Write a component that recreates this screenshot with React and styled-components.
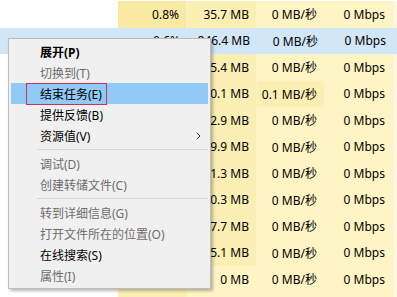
import React from "react";
import styled, { createGlobalStyle } from "styled-components";

const Global = createGlobalStyle`
  html, body { margin: 0; padding: 0; background: #ffffff; }
  body { width: 397px; height: 297px; overflow: hidden; font-family: "Noto Sans", "Noto Sans CJK SC", sans-serif; }
`;

const Page = styled.div`
  position: relative;
  width: 397px;
  height: 297px;
  overflow: hidden;
  background: #ffffff;
`;

const Table = styled.div`
  display: grid;
  grid-template-columns: 118px 69px 70px 68px 68px 1fr;
  grid-auto-rows: 26.5px;
  padding-top: 1px;
`;

const heat = {
  0: "#ffffff",
  1: "#fff4c4",
  2: "#fcefb3",
  3: "#f9e9a3",
  4: "#fdf6dc",
};

const Cell = styled.div`
  display: flex;
  align-items: center;
  justify-content: flex-end;
  padding-right: 7px;
  font-size: 12px;
  color: #000;
  white-space: nowrap;
  background: ${(p) => (p.$sel ? "#d1e7f8" : heat[p.$h])};
  border-right: ${(p) => (p.$h === 0 ? "none" : p.$sel ? "1px solid #d8ebf8" : "1px solid #fbf1cc")};
  box-sizing: border-box;
`;

const Menu = styled.div`
  position: absolute;
  left: 8px;
  top: 38px;
  width: 203px;
  box-sizing: border-box;
  background: #f0f0f0;
  border: 1px solid #bdbdbd;
  padding: 2px;
  box-shadow: 2px 2px 3px rgba(0, 0, 0, 0.28);
  font-family: "Noto Sans", "Noto Sans CJK SC", sans-serif;
`;

const Item = styled.div`
  position: relative;
  height: 21px;
  display: flex;
  align-items: center;
  padding-left: 29px;
  font-size: 12px;
  font-weight: ${(p) => (p.$bold ? 700 : 400)};
  color: ${(p) => (p.$disabled ? "#6d6d6d" : "#000")};
  background: ${(p) => (p.$active ? "#91c9f7" : "transparent")};
  white-space: nowrap;
`;

const Sep = styled.div`
  height: 7px;
  display: flex;
  align-items: center;
  padding-left: 26px;
  &::after {
    content: "";
    flex: 1;
    height: 1px;
    background: #d7d7d7;
  }
`;

const Arrow = styled.svg`
  position: absolute;
  right: 7px;
  top: 7px;
`;

const RedBox = styled.div`
  position: absolute;
  left: 15px;
  top: 0;
  width: 81px;
  height: 22px;
  box-sizing: border-box;
  border: 1.5px solid #c8344a;
`;

const rows = [
  ["0.8%", 3, "35.7 MB", 2, "0 MB/秒", 1, "0 Mbps", 1],
  ["0.6%", 0, "846.4 MB", 0, "0 MB/秒", 0, "0 Mbps", 0, true],
  ["0%", 2, "25.4 MB", 2, "0 MB/秒", 1, "0 Mbps", 1],
  ["0%", 2, "30.1 MB", 2, "0.1 MB/秒", 2, "0 Mbps", 1],
  ["0%", 2, "12.9 MB", 2, "0 MB/秒", 1, "0 Mbps", 1],
  ["0%", 2, "19.9 MB", 2, "0 MB/秒", 1, "0 Mbps", 1],
  ["0%", 2, "11.3 MB", 2, "0 MB/秒", 1, "0 Mbps", 1],
  ["0%", 2, "10.3 MB", 2, "0 MB/秒", 1, "0 Mbps", 1],
  ["0%", 2, "17.7 MB", 2, "0 MB/秒", 1, "0 Mbps", 1],
  ["0%", 2, "15.1 MB", 2, "0 MB/秒", 1, "0 Mbps", 1],
  ["0%", 2, "0 MB", 1, "0 MB/秒", 1, "0 Mbps", 1],
  ["", 2, "", 1, "", 1, "", 1],
];

const menu = [
  { t: "展开(P)", bold: true },
  { t: "切换到(T)", disabled: true },
  { t: "结束任务(E)", active: true, box: true },
  { t: "提供反馈(B)" },
  { t: "资源值(V)", arrow: true },
  { sep: true },
  { t: "调试(D)", disabled: true },
  { t: "创建转储文件(C)", disabled: true },
  { sep: true },
  { t: "转到详细信息(G)", disabled: true },
  { t: "打开文件所在的位置(O)", disabled: true },
  { t: "在线搜索(S)" },
  { t: "属性(I)", disabled: true },
];

export default function App() {
  return (
    <Page>
      <Global />
      <Table>
        {rows.map((r, i) => {
          const sel = !!r[8];
          return (
            <React.Fragment key={i}>
              <Cell $h={0} $sel={sel} />
              <Cell $h={r[1]} $sel={sel}>{r[0]}</Cell>
              <Cell $h={r[3]} $sel={sel}>{r[2]}</Cell>
              <Cell $h={r[5]} $sel={sel}>{r[4]}</Cell>
              <Cell $h={r[7]} $sel={sel}>{r[6]}</Cell>
              <Cell $h={4} $sel={sel} />
            </React.Fragment>
          );
        })}
      </Table>
      <Menu>
        {menu.map((m, i) =>
          m.sep ? (
            <Sep key={i} />
          ) : (
            <Item key={i} $bold={m.bold} $disabled={m.disabled} $active={m.active}>
              {m.t}
              {m.arrow && (
                <Arrow width="5" height="8" viewBox="0 0 5 8">
                  <path d="M0.8 0.8 L4 4 L0.8 7.2" fill="none" stroke="#333" strokeWidth="1" />
                </Arrow>
              )}
              {m.box && <RedBox />}
            </Item>
          )
        )}
      </Menu>
    </Page>
  );
}
